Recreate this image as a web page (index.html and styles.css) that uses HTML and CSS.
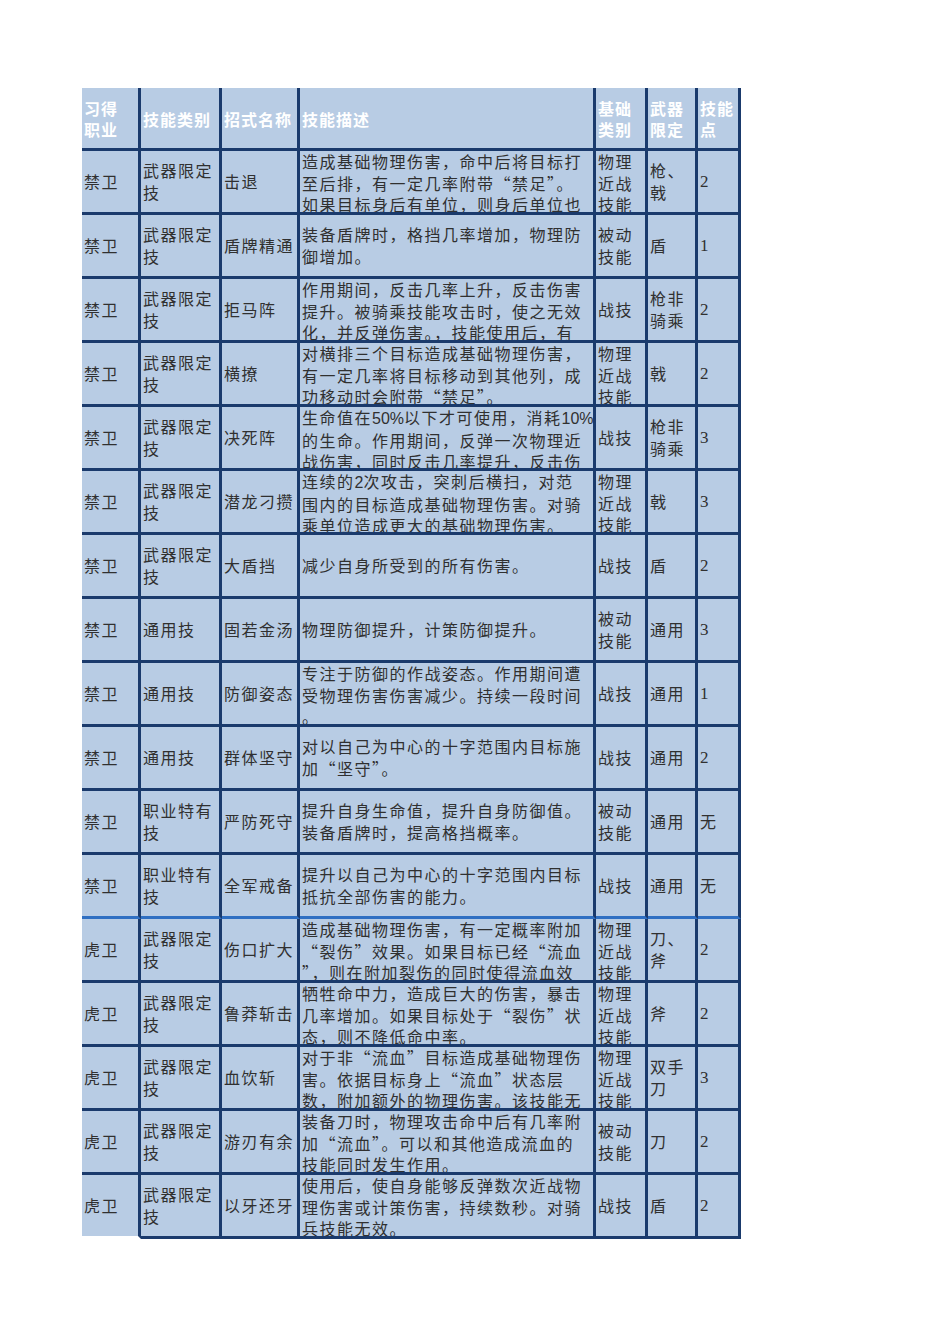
FILE: index.html
```html
<!DOCTYPE html>
<html lang="zh-CN">
<head>
<meta charset="utf-8">
<title>技能表</title>
<link rel="stylesheet" href="styles.css">
</head>
<body>
<div class="sheet">
  <div class="grid">
    <div class="c hd"><div class="t">习得<br>职业</div></div>
    <div class="c hd"><div class="t">技能类别</div></div>
    <div class="c hd"><div class="t">招式名称</div></div>
    <div class="c hd"><div class="t">技能描述</div></div>
    <div class="c hd"><div class="t">基础<br>类别</div></div>
    <div class="c hd"><div class="t">武器<br>限定</div></div>
    <div class="c hd"><div class="t">技能<br>点</div></div>

    <div class="c"><div class="t">禁卫</div></div>
    <div class="c"><div class="t">武器限定<br>技</div></div>
    <div class="c"><div class="t">击退</div></div>
    <div class="c"><div class="t">造成基础物理伤害，命中后将目标打<br>至后排，有一定几率附带“禁足”。<br>如果目标身后有单位，则身后单位也</div></div>
    <div class="c"><div class="t">物理<br>近战<br>技能</div></div>
    <div class="c"><div class="t">枪、<br>戟</div></div>
    <div class="c"><div class="t num">2</div></div>

    <div class="c"><div class="t">禁卫</div></div>
    <div class="c"><div class="t">武器限定<br>技</div></div>
    <div class="c"><div class="t">盾牌精通</div></div>
    <div class="c"><div class="t">装备盾牌时，格挡几率增加，物理防<br>御增加。</div></div>
    <div class="c"><div class="t">被动<br>技能</div></div>
    <div class="c"><div class="t">盾</div></div>
    <div class="c"><div class="t num">1</div></div>

    <div class="c"><div class="t">禁卫</div></div>
    <div class="c"><div class="t">武器限定<br>技</div></div>
    <div class="c"><div class="t">拒马阵</div></div>
    <div class="c"><div class="t">作用期间，反击几率上升，反击伤害<br>提升。被骑乘技能攻击时，使之无效<br>化，并反弹伤害。，技能使用后，有</div></div>
    <div class="c"><div class="t">战技</div></div>
    <div class="c"><div class="t">枪非<br>骑乘</div></div>
    <div class="c"><div class="t num">2</div></div>

    <div class="c"><div class="t">禁卫</div></div>
    <div class="c"><div class="t">武器限定<br>技</div></div>
    <div class="c"><div class="t">横撩</div></div>
    <div class="c"><div class="t">对横排三个目标造成基础物理伤害，<br>有一定几率将目标移动到其他列，成<br>功移动时会附带“禁足”。</div></div>
    <div class="c"><div class="t">物理<br>近战<br>技能</div></div>
    <div class="c"><div class="t">戟</div></div>
    <div class="c"><div class="t num">2</div></div>

    <div class="c"><div class="t">禁卫</div></div>
    <div class="c"><div class="t">武器限定<br>技</div></div>
    <div class="c"><div class="t">决死阵</div></div>
    <div class="c"><div class="t">生命值在<span class="lat">50%</span>以下才可使用，消耗<span class="lat">10%</span><br>的生命。作用期间，反弹一次物理近<br>战伤害，同时反击几率提升，反击伤</div></div>
    <div class="c"><div class="t">战技</div></div>
    <div class="c"><div class="t">枪非<br>骑乘</div></div>
    <div class="c"><div class="t num">3</div></div>

    <div class="c"><div class="t">禁卫</div></div>
    <div class="c"><div class="t">武器限定<br>技</div></div>
    <div class="c"><div class="t">潜龙刁攒</div></div>
    <div class="c"><div class="t">连续的<span class="lat">2</span>次攻击，突刺后横扫，对范<br>围内的目标造成基础物理伤害。对骑<br>乘单位造成更大的基础物理伤害。</div></div>
    <div class="c"><div class="t">物理<br>近战<br>技能</div></div>
    <div class="c"><div class="t">戟</div></div>
    <div class="c"><div class="t num">3</div></div>

    <div class="c"><div class="t">禁卫</div></div>
    <div class="c"><div class="t">武器限定<br>技</div></div>
    <div class="c"><div class="t">大盾挡</div></div>
    <div class="c"><div class="t">减少自身所受到的所有伤害。</div></div>
    <div class="c"><div class="t">战技</div></div>
    <div class="c"><div class="t">盾</div></div>
    <div class="c"><div class="t num">2</div></div>

    <div class="c"><div class="t">禁卫</div></div>
    <div class="c"><div class="t">通用技</div></div>
    <div class="c"><div class="t">固若金汤</div></div>
    <div class="c"><div class="t">物理防御提升，计策防御提升。</div></div>
    <div class="c"><div class="t">被动<br>技能</div></div>
    <div class="c"><div class="t">通用</div></div>
    <div class="c"><div class="t num">3</div></div>

    <div class="c"><div class="t">禁卫</div></div>
    <div class="c"><div class="t">通用技</div></div>
    <div class="c"><div class="t">防御姿态</div></div>
    <div class="c"><div class="t">专注于防御的作战姿态。作用期间遭<br>受物理伤害伤害减少。持续一段时间<br>。</div></div>
    <div class="c"><div class="t">战技</div></div>
    <div class="c"><div class="t">通用</div></div>
    <div class="c"><div class="t num">1</div></div>

    <div class="c"><div class="t">禁卫</div></div>
    <div class="c"><div class="t">通用技</div></div>
    <div class="c"><div class="t">群体坚守</div></div>
    <div class="c"><div class="t">对以自己为中心的十字范围内目标施<br>加“坚守”。</div></div>
    <div class="c"><div class="t">战技</div></div>
    <div class="c"><div class="t">通用</div></div>
    <div class="c"><div class="t num">2</div></div>

    <div class="c"><div class="t">禁卫</div></div>
    <div class="c"><div class="t">职业特有<br>技</div></div>
    <div class="c"><div class="t">严防死守</div></div>
    <div class="c"><div class="t">提升自身生命值，提升自身防御值。<br>装备盾牌时，提高格挡概率。</div></div>
    <div class="c"><div class="t">被动<br>技能</div></div>
    <div class="c"><div class="t">通用</div></div>
    <div class="c"><div class="t">无</div></div>

    <div class="c sep"><div class="t">禁卫</div></div>
    <div class="c sep"><div class="t">职业特有<br>技</div></div>
    <div class="c sep"><div class="t">全军戒备</div></div>
    <div class="c sep"><div class="t">提升以自己为中心的十字范围内目标<br>抵抗全部伤害的能力。</div></div>
    <div class="c sep"><div class="t">战技</div></div>
    <div class="c sep"><div class="t">通用</div></div>
    <div class="c sep"><div class="t">无</div></div>

    <div class="c"><div class="t">虎卫</div></div>
    <div class="c"><div class="t">武器限定<br>技</div></div>
    <div class="c"><div class="t">伤口扩大</div></div>
    <div class="c"><div class="t">造成基础物理伤害，有一定概率附加<br>“裂伤”效果。如果目标已经“流血<br>”，则在附加裂伤的同时使得流血效</div></div>
    <div class="c"><div class="t">物理<br>近战<br>技能</div></div>
    <div class="c"><div class="t">刀、<br>斧</div></div>
    <div class="c"><div class="t num">2</div></div>

    <div class="c"><div class="t">虎卫</div></div>
    <div class="c"><div class="t">武器限定<br>技</div></div>
    <div class="c"><div class="t">鲁莽斩击</div></div>
    <div class="c"><div class="t">牺牲命中力，造成巨大的伤害，暴击<br>几率增加。如果目标处于“裂伤”状<br>态，则不降低命中率。</div></div>
    <div class="c"><div class="t">物理<br>近战<br>技能</div></div>
    <div class="c"><div class="t">斧</div></div>
    <div class="c"><div class="t num">2</div></div>

    <div class="c"><div class="t">虎卫</div></div>
    <div class="c"><div class="t">武器限定<br>技</div></div>
    <div class="c"><div class="t">血饮斩</div></div>
    <div class="c"><div class="t">对于非“流血”目标造成基础物理伤<br>害。依据目标身上“流血”状态层<br>数，附加额外的物理伤害。该技能无</div></div>
    <div class="c"><div class="t">物理<br>近战<br>技能</div></div>
    <div class="c"><div class="t">双手<br>刀</div></div>
    <div class="c"><div class="t num">3</div></div>

    <div class="c"><div class="t">虎卫</div></div>
    <div class="c"><div class="t">武器限定<br>技</div></div>
    <div class="c"><div class="t">游刃有余</div></div>
    <div class="c"><div class="t">装备刀时，物理攻击命中后有几率附<br>加“流血”。可以和其他造成流血的<br>技能同时发生作用。</div></div>
    <div class="c"><div class="t">被动<br>技能</div></div>
    <div class="c"><div class="t">刀</div></div>
    <div class="c"><div class="t num">2</div></div>

    <div class="c last-first"><div class="t">虎卫</div></div>
    <div class="c"><div class="t">武器限定<br>技</div></div>
    <div class="c"><div class="t">以牙还牙</div></div>
    <div class="c"><div class="t">使用后，使自身能够反弹数次近战物<br>理伤害或计策伤害，持续数秒。对骑<br>兵技能无效。</div></div>
    <div class="c"><div class="t">战技</div></div>
    <div class="c"><div class="t">盾</div></div>
    <div class="c"><div class="t num">2</div></div>
  </div>
</div>
</body>
</html>
```

FILE: styles.css
```css
html, body {
  margin: 0;
  padding: 0;
  background: #ffffff;
}

.sheet {
  padding: 88px 0 0 82px;
}

.grid {
  display: grid;
  grid-template-columns: 59px 81px 78px 296px 52px 50px 43px;
  grid-template-rows: 63px repeat(17, 64px);
  width: 659px;
}

.c {
  box-sizing: border-box;
  background: #b8cce4;
  background-clip: padding-box;
  border-right: 3px solid #1a3a6c;
  border-bottom: 3px solid #1a3a6c;
  display: flex;
  align-items: safe center;
  padding-left: 2px;
  overflow: hidden;
  font-family: "Noto Sans CJK SC", "Liberation Serif", sans-serif;
  font-size: 16px;
  letter-spacing: 1.5px;
  color: #303030;
}

.c .t {
  line-height: 21.5px;
  white-space: nowrap;
}

.c .num {
  font-family: "Liberation Serif", serif;
  font-size: 17px;
}

.lat {
  font-family: "Liberation Sans", sans-serif;
  letter-spacing: 0;
}

.hd {
  font-weight: 700;
  color: #ffffff;
  letter-spacing: 1px;
}

.hd .t {
  line-height: 21px;
  padding-top: 2px;
}

.sep {
  border-bottom-color: #2f6fc2;
}

.last-first {
  border-bottom-color: transparent;
}
```
